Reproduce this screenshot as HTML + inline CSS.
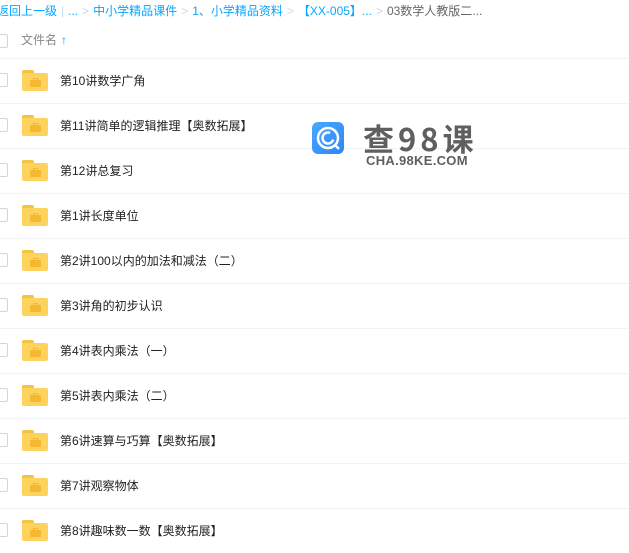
<!DOCTYPE html>
<html><head><meta charset="utf-8"><style>
*{margin:0;padding:0;box-sizing:border-box}
body{width:629px;height:548px;overflow:hidden;background:#fff;font-family:"Liberation Sans","Noto Sans CJK SC",sans-serif;position:relative}
.bc{position:absolute;top:2px;left:-3px;font-size:12px;color:#06a7ff;white-space:nowrap}
.bc .g{color:#c4d8f0;margin:0 4px}
.bc .d{color:#666}
.hd{position:absolute;top:31px;left:21px;font-size:12px;color:#888}
.hd b{color:#06a7ff;font-weight:bold;margin-left:4px}
.cb{position:absolute;left:-4px;width:12px;height:14px;border:1px solid #cfd6e0;border-radius:2px;background:#fff}
.sep{position:absolute;left:0;width:629px;height:1px;background:#f1f3f8}
.row{position:absolute;left:0;width:629px;height:45px}
.fold{position:absolute;left:22px;width:26px;height:21px}
.fold .t{position:absolute;left:0;top:0;width:12px;height:5px;background:#f5c342;border-radius:2px 2px 0 0}
.fold .b{position:absolute;left:0;top:3px;width:26px;height:18px;background:#fdd35e;border-radius:2px}
.fold .k{position:absolute;left:8px;top:10px;width:11px;height:7px;background:#f6b731;border-radius:1px}
.fold .h{position:absolute;left:11px;top:8px;width:5px;height:3px;border:1px solid #f6b731;border-bottom:none}
.nm{position:absolute;left:60px;font-size:12px;color:#222}
.logo{position:absolute;left:312px;top:122px;width:32px;height:32px;border-radius:6px;background:linear-gradient(135deg,#4aa8ff,#2e86f5)}
.t1{position:absolute;left:363px;top:115px;font-size:31px;font-weight:bold;color:#5f5f5f;letter-spacing:4px;font-family:"Noto Sans CJK SC",sans-serif}
.t2{position:absolute;left:366px;top:153px;font-size:13px;font-weight:bold;color:#5f5f5f;letter-spacing:0.3px}
</style></head><body>
<div class="bc">返回上一级<span class="g">|</span>...<span class="g">&gt;</span>中小学精品课件<span class="g">&gt;</span>1、小学精品资料<span class="g">&gt;</span>【XX-005】...<span class="g">&gt;</span><span class="d">03数学人教版二...</span></div>
<div class="cb" style="top:34px"></div>
<div class="hd">文件名<b>↑</b></div>
<div class="sep" style="top:58px"></div>

<div class="row" style="top:58px"><div class="cb" style="top:15px"></div><div class="fold" style="top:12px"><div class="t"></div><div class="b"></div><div class="h"></div><div class="k"></div></div><div class="nm" style="top:14px">第10讲数学广角</div></div>
<div class="sep" style="top:103px"></div>
<div class="row" style="top:103px"><div class="cb" style="top:15px"></div><div class="fold" style="top:12px"><div class="t"></div><div class="b"></div><div class="h"></div><div class="k"></div></div><div class="nm" style="top:14px">第11讲简单的逻辑推理【奥数拓展】</div></div>
<div class="sep" style="top:148px"></div>
<div class="row" style="top:148px"><div class="cb" style="top:15px"></div><div class="fold" style="top:12px"><div class="t"></div><div class="b"></div><div class="h"></div><div class="k"></div></div><div class="nm" style="top:14px">第12讲总复习</div></div>
<div class="sep" style="top:193px"></div>
<div class="row" style="top:193px"><div class="cb" style="top:15px"></div><div class="fold" style="top:12px"><div class="t"></div><div class="b"></div><div class="h"></div><div class="k"></div></div><div class="nm" style="top:14px">第1讲长度单位</div></div>
<div class="sep" style="top:238px"></div>
<div class="row" style="top:238px"><div class="cb" style="top:15px"></div><div class="fold" style="top:12px"><div class="t"></div><div class="b"></div><div class="h"></div><div class="k"></div></div><div class="nm" style="top:14px">第2讲100以内的加法和减法（二）</div></div>
<div class="sep" style="top:283px"></div>
<div class="row" style="top:283px"><div class="cb" style="top:15px"></div><div class="fold" style="top:12px"><div class="t"></div><div class="b"></div><div class="h"></div><div class="k"></div></div><div class="nm" style="top:14px">第3讲角的初步认识</div></div>
<div class="sep" style="top:328px"></div>
<div class="row" style="top:328px"><div class="cb" style="top:15px"></div><div class="fold" style="top:12px"><div class="t"></div><div class="b"></div><div class="h"></div><div class="k"></div></div><div class="nm" style="top:14px">第4讲表内乘法（一）</div></div>
<div class="sep" style="top:373px"></div>
<div class="row" style="top:373px"><div class="cb" style="top:15px"></div><div class="fold" style="top:12px"><div class="t"></div><div class="b"></div><div class="h"></div><div class="k"></div></div><div class="nm" style="top:14px">第5讲表内乘法（二）</div></div>
<div class="sep" style="top:418px"></div>
<div class="row" style="top:418px"><div class="cb" style="top:15px"></div><div class="fold" style="top:12px"><div class="t"></div><div class="b"></div><div class="h"></div><div class="k"></div></div><div class="nm" style="top:14px">第6讲速算与巧算【奥数拓展】</div></div>
<div class="sep" style="top:463px"></div>
<div class="row" style="top:463px"><div class="cb" style="top:15px"></div><div class="fold" style="top:12px"><div class="t"></div><div class="b"></div><div class="h"></div><div class="k"></div></div><div class="nm" style="top:14px">第7讲观察物体</div></div>
<div class="sep" style="top:508px"></div>
<div class="row" style="top:508px"><div class="cb" style="top:15px"></div><div class="fold" style="top:12px"><div class="t"></div><div class="b"></div><div class="h"></div><div class="k"></div></div><div class="nm" style="top:14px">第8讲趣味数一数【奥数拓展】</div></div>

<div class="logo"><svg width="32" height="32" viewBox="0 0 32 32"><circle cx="16" cy="16" r="10" fill="none" stroke="#fff" stroke-width="2.5"/><circle cx="16" cy="16" r="5.5" fill="none" stroke="#fff" stroke-width="2.5" stroke-dasharray="26 8" transform="rotate(20 16 16)"/><path d="M23 23 L27 27" stroke="#fff" stroke-width="2.5"/></svg></div>
<div class="t1">查98课</div>
<div class="t2">CHA.98KE.COM</div>
</body></html>
